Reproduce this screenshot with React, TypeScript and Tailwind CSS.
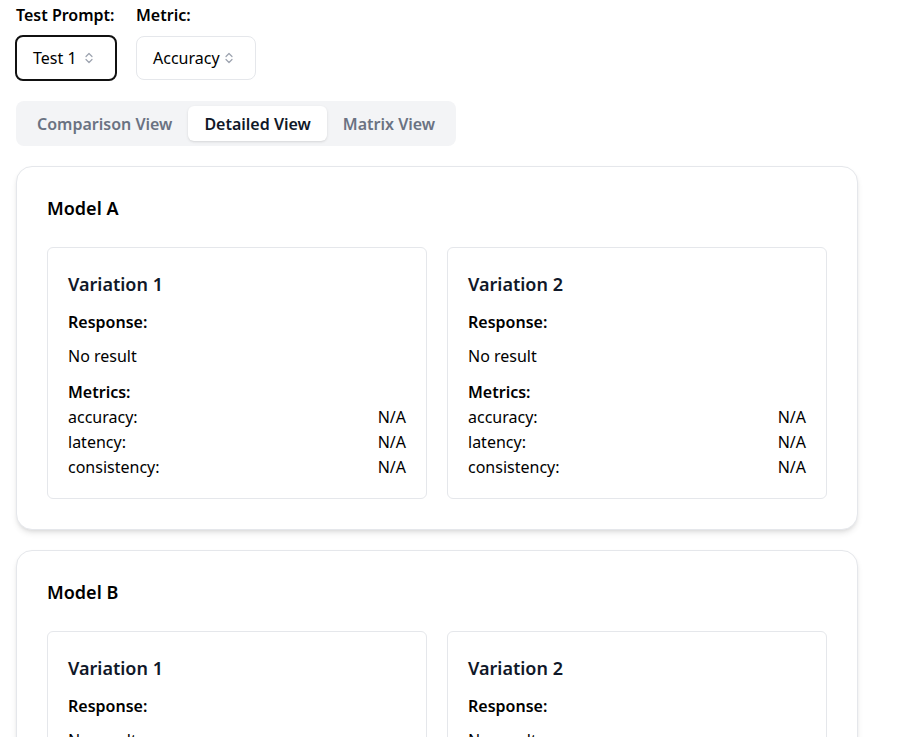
import { useEffect } from "react"

const models = ["Model A", "Model B", "Model C"]
const variations = ["Variation 1", "Variation 2"]
const metrics = ["accuracy", "latency", "consistency"]

function UpDown() {
   return (
      <svg width="8" height="12" viewBox="0 0 8 12" fill="none" stroke="#9ca3af" strokeWidth="1.2" strokeLinecap="round" strokeLinejoin="round">
         <path d="M1 4.5 L4 1.5 L7 4.5" />
         <path d="M1 7.5 L4 10.5 L7 7.5" />
      </svg>
   )
}

function VariationCard({ name }: { name: string }) {
   return (
      <div className="border border-gray-200 rounded-md px-5 pt-5 pb-[18px] bg-white">
         <h3 className="text-[18px] leading-[32px] font-semibold text-gray-900">{name}</h3>
         <p className="mt-[10px] leading-[24px] font-semibold">Response:</p>
         <p className="mt-[10px] leading-[24px]">No result</p>
         <p className="mt-[12px] leading-[25px] font-semibold">Metrics:</p>
         {metrics.map((m) => (
            <div key={m} className="flex justify-between leading-[25px]">
               <span>{m}:</span>
               <span>N/A</span>
            </div>
         ))}
      </div>
   )
}

export default function App() {
   useEffect(() => {
      window.scrollTo(0, 69)
   }, [])

   return (
      <div className="px-4 pt-4 pb-2 text-black text-base" style={{ fontFamily: '"Noto Sans", sans-serif' }}>
         <h1 className="text-2xl font-bold leading-[32px] mb-[25px]">LLM Evaluation</h1>

         <div className="flex gap-5">
            <div className="flex flex-col w-[100px]">
               <label className="font-semibold leading-[22px] mb-[10px]">Test Prompt:</label>
               <div className="h-[46px] flex items-center justify-between pl-4 pr-[22px] rounded-lg border-2 border-[#111] -mx-px -my-px">
                  <span>Test 1</span>
                  <UpDown />
               </div>
            </div>
            <div className="flex flex-col">
               <label className="font-semibold leading-[22px] mb-[10px]">Metric:</label>
               <div className="h-[44px] flex items-center gap-[5px] pl-4 pr-[22px] rounded-lg border border-gray-200">
                  <span>Accuracy</span>
                  <UpDown />
               </div>
            </div>
         </div>

         <div className="mt-[21px] inline-flex p-[5px] bg-gray-100 rounded-lg">
            <button className="h-[35px] px-4 font-semibold text-gray-500 rounded-md">Comparison View</button>
            <button className="h-[35px] px-4 font-semibold text-gray-900 bg-white rounded-md shadow-sm">Detailed View</button>
            <button className="h-[35px] px-4 font-semibold text-gray-500 rounded-md">Matrix View</button>
         </div>

         <div className="mt-5 flex flex-col gap-5 mr-[26px]">
            {models.map((model) => (
               <div key={model} className="border border-gray-200 rounded-2xl shadow-md p-[30px] bg-white">
                  <h2 className="text-[18px] leading-[22px] font-semibold mb-[28px]">{model}</h2>
                  <div className="grid grid-cols-2 gap-5">
                     {variations.map((v) => (
                        <VariationCard key={v} name={v} />
                     ))}
                  </div>
               </div>
            ))}
         </div>
      </div>
   )
}
